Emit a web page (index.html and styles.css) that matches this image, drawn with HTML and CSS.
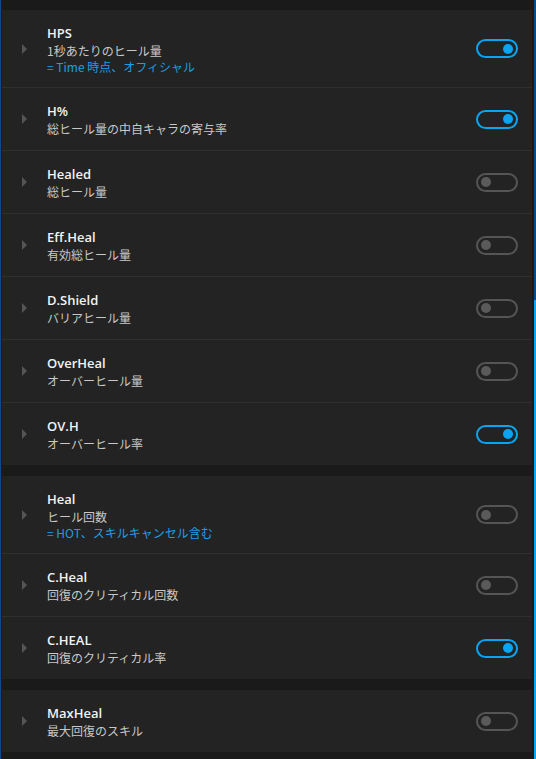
FILE: index.html
```html
<!DOCTYPE html>
<html lang="ja">
<head>
  <meta charset="UTF-8" />
  <title>Heal columns</title>
  <link rel="stylesheet" href="styles.css">
</head>
<body>
  <div class="page">
    <div class="group">
      <div class="row tall">
        <span class="arrow"></span>
        <div class="text">
          <div class="title">HPS</div>
          <div class="desc">1秒あたりのヒール量</div>
          <div class="note">= Time 時点、オフィシャル</div>
        </div>
        <span class="toggle on"></span>
      </div>
      <div class="row">
        <span class="arrow"></span>
        <div class="text">
          <div class="title">H%</div>
          <div class="desc">総ヒール量の中自キャラの寄与率</div>
        </div>
        <span class="toggle on"></span>
      </div>
      <div class="row">
        <span class="arrow"></span>
        <div class="text">
          <div class="title">Healed</div>
          <div class="desc">総ヒール量</div>
        </div>
        <span class="toggle"></span>
      </div>
      <div class="row">
        <span class="arrow"></span>
        <div class="text">
          <div class="title">Eff.Heal</div>
          <div class="desc">有効総ヒール量</div>
        </div>
        <span class="toggle"></span>
      </div>
      <div class="row">
        <span class="arrow"></span>
        <div class="text">
          <div class="title">D.Shield</div>
          <div class="desc">バリアヒール量</div>
        </div>
        <span class="toggle"></span>
      </div>
      <div class="row">
        <span class="arrow"></span>
        <div class="text">
          <div class="title">OverHeal</div>
          <div class="desc">オーバーヒール量</div>
        </div>
        <span class="toggle"></span>
      </div>
      <div class="row">
        <span class="arrow"></span>
        <div class="text">
          <div class="title">OV.H</div>
          <div class="desc">オーバーヒール率</div>
        </div>
        <span class="toggle on"></span>
      </div>
    </div>

    <div class="group">
      <div class="row tall">
        <span class="arrow"></span>
        <div class="text">
          <div class="title">Heal</div>
          <div class="desc">ヒール回数</div>
          <div class="note">= HOT、スキルキャンセル含む</div>
        </div>
        <span class="toggle"></span>
      </div>
      <div class="row">
        <span class="arrow"></span>
        <div class="text">
          <div class="title">C.Heal</div>
          <div class="desc">回復のクリティカル回数</div>
        </div>
        <span class="toggle"></span>
      </div>
      <div class="row">
        <span class="arrow"></span>
        <div class="text">
          <div class="title">C.HEAL</div>
          <div class="desc">回復のクリティカル率</div>
        </div>
        <span class="toggle on"></span>
      </div>
    </div>

    <div class="group">
      <div class="row">
        <span class="arrow"></span>
        <div class="text">
          <div class="title">MaxHeal</div>
          <div class="desc">最大回復のスキル</div>
        </div>
        <span class="toggle"></span>
      </div>
    </div>
  </div>
  <div class="scroll-thumb"></div>
</body>
</html>
```

FILE: styles.css
```css
* { margin: 0; padding: 0; box-sizing: border-box; }
html, body { height: 100%; }
body {
  background-color: #1a1a1a;
  color: #fff;
  font-family: 'Open Sans', 'Noto Sans', 'Noto Sans CJK JP', sans-serif;
  border-left: 1px solid #0b4a82;
  border-right: 2px solid #0b4a82;
  overflow: hidden;
}

.page {
  padding: 10px 2px 0 1px;
  display: flex;
  flex-direction: column;
  gap: 11px;
}

.group {
  background-color: #232323;
}

.row {
  display: flex;
  align-items: center;
  height: 62px;
  padding: 0 14px 0 20px;
}
.row + .row {
  height: 63px;
  border-top: 1px solid #2f2f2f;
}
.row.tall { height: 77px; }

.arrow {
  width: 0;
  height: 0;
  border-top: 5px solid transparent;
  border-bottom: 5px solid transparent;
  border-left: 5px solid #555;
  margin-right: 20px;
}

.text {
  flex: 1;
  line-height: 16px;
}
.title {
  font-size: 13px;
  font-weight: 600;
  line-height: 18px;
  color: #f2f2f2;
}
.desc {
  font-family: 'Noto Sans CJK JP', sans-serif;
  font-size: 12px;
  line-height: 17px;
  color: #c8c8c8;
}
.note {
  font-family: 'Noto Sans CJK JP', sans-serif;
  font-size: 12px;
  line-height: 15px;
  color: #1a9fe6;
}

.toggle {
  position: relative;
  width: 42px;
  height: 19px;
  border: 2px solid #555;
  border-radius: 10px;
}
.toggle::after {
  content: '';
  position: absolute;
  top: 2.5px;
  left: 3px;
  width: 10px;
  height: 10px;
  border-radius: 50%;
  background-color: #5a5a5a;
}
.toggle.on { border-color: #0aa4f0; }
.toggle.on::after {
  left: auto;
  right: 3px;
  background-color: #0aa4f0;
}

.scroll-thumb {
  position: fixed;
  right: 0;
  top: 300px;
  bottom: 0;
  width: 2px;
  background-color: #0aa4f0;
}
```
